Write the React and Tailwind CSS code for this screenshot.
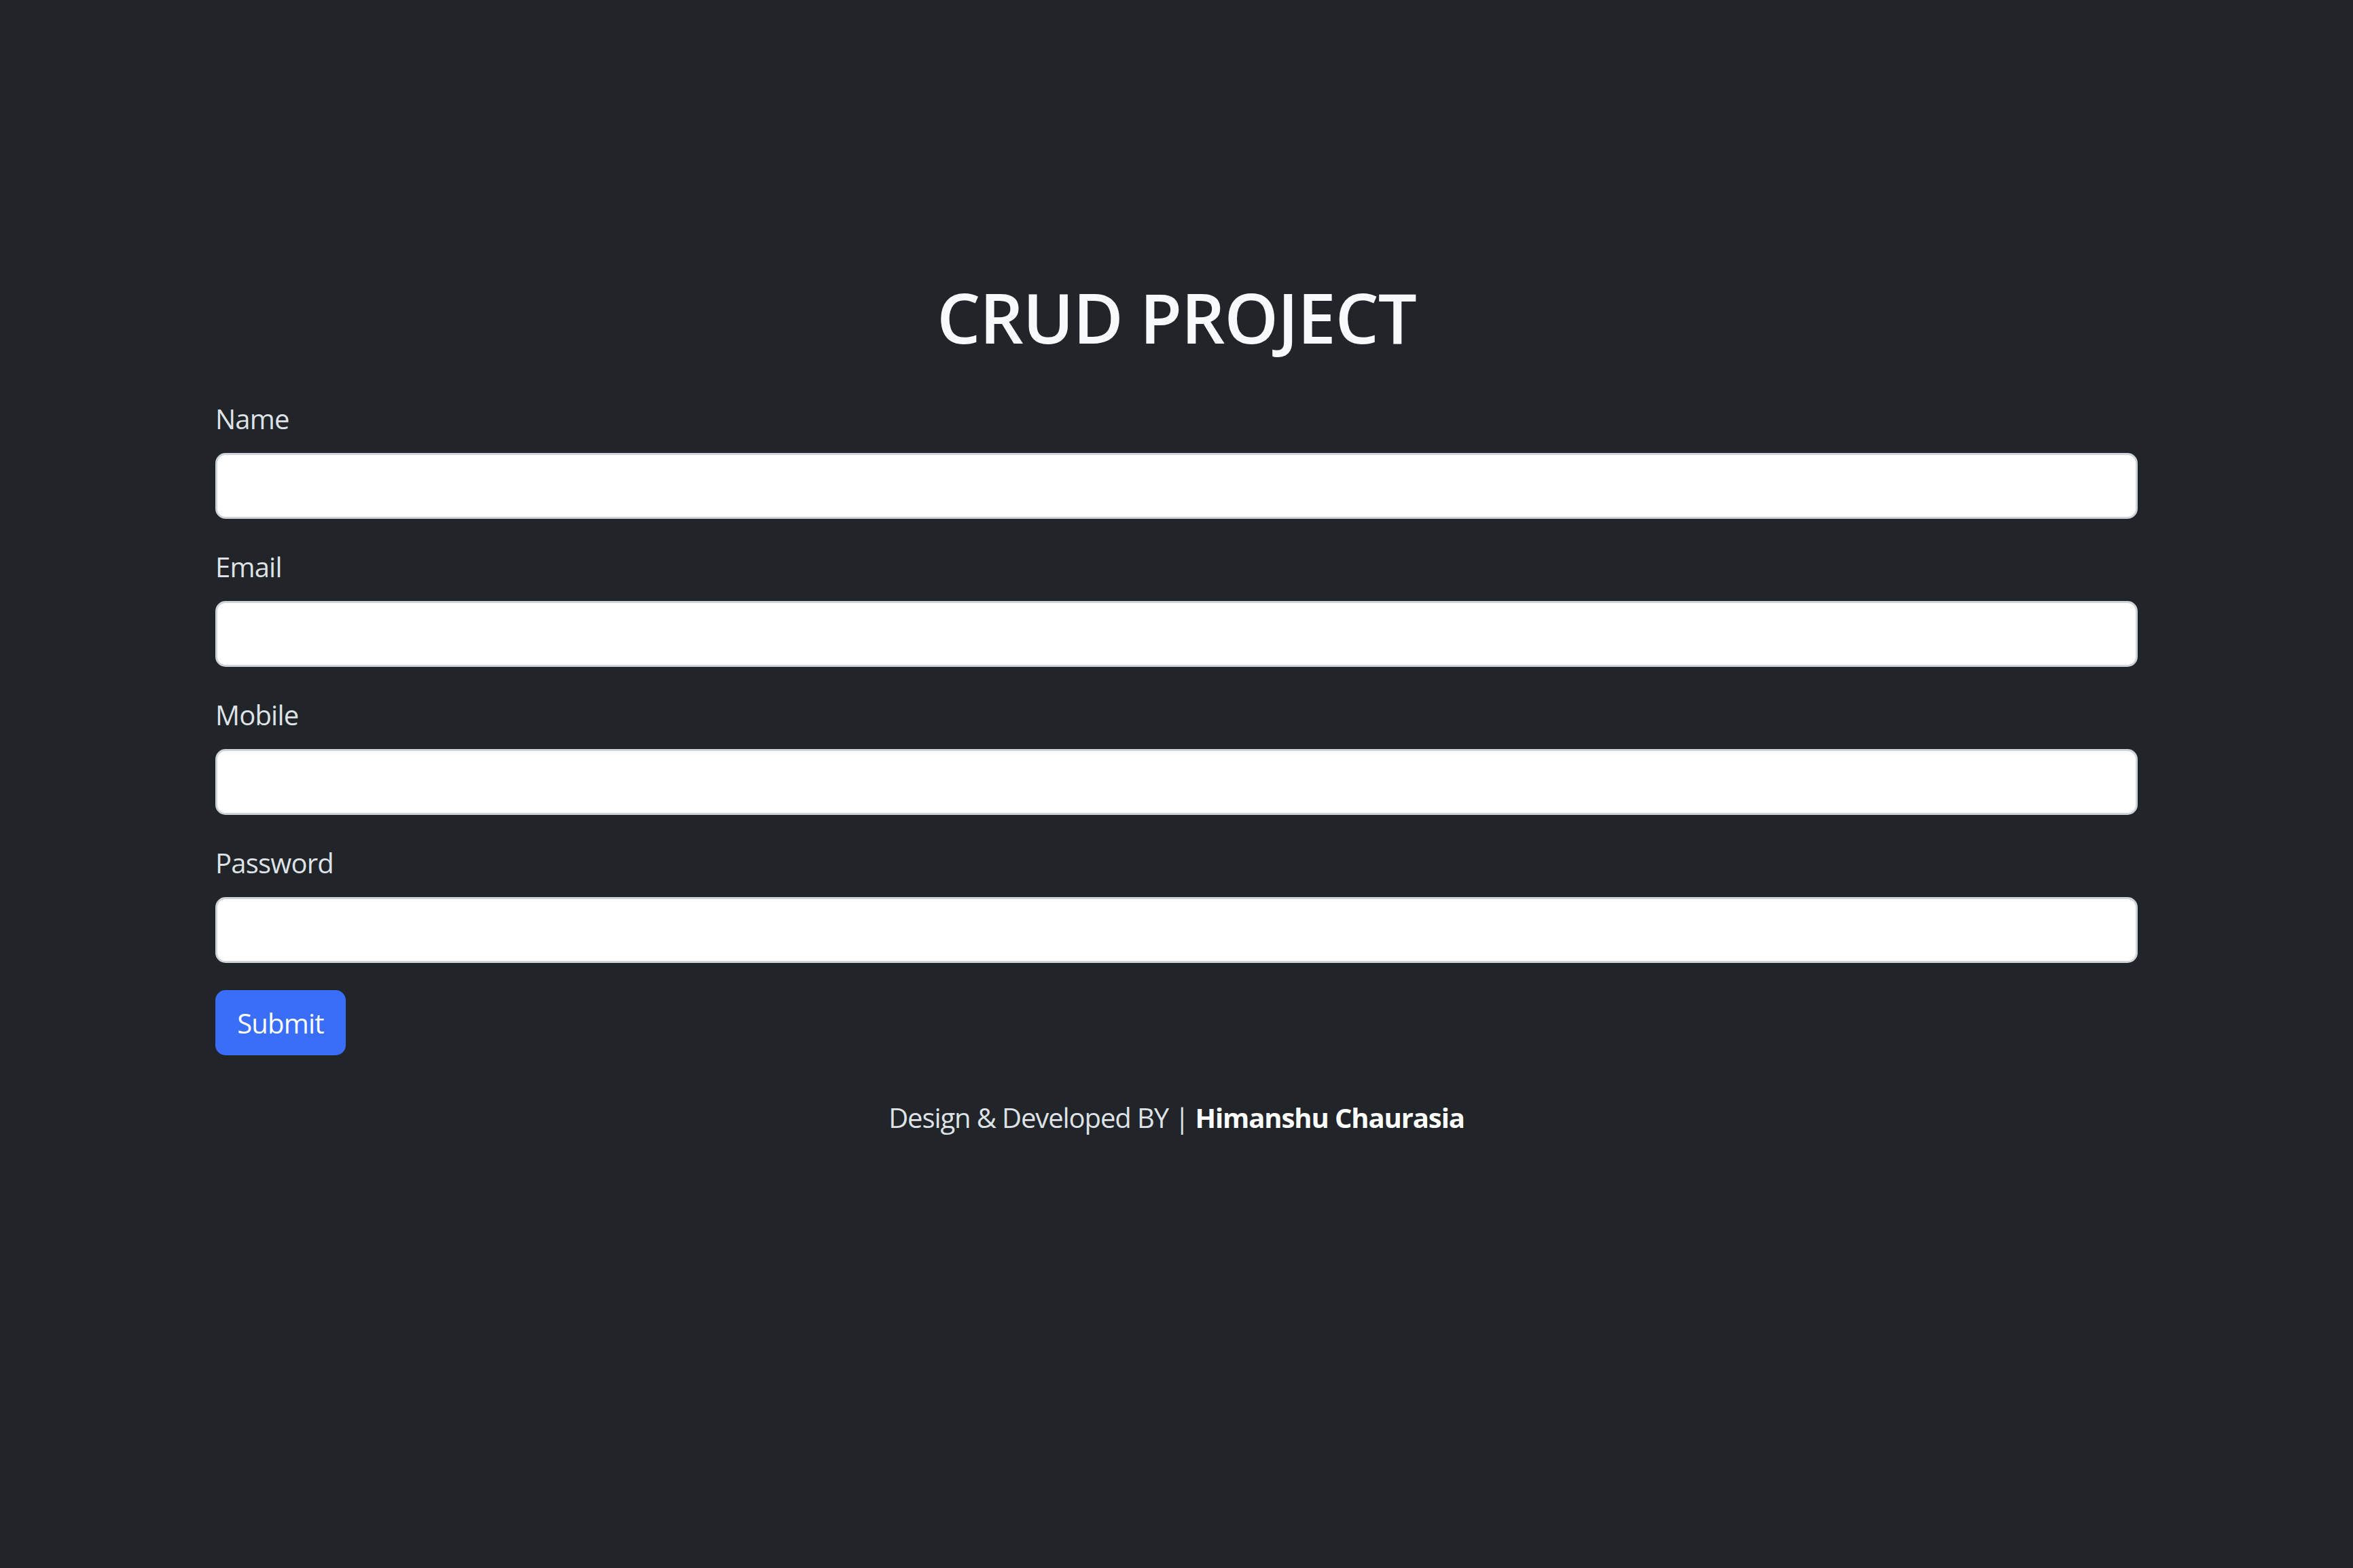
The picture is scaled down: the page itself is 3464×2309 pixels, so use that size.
export default function App() {
  const fields = ["Name", "Email", "Mobile", "Password"];
  return (
    <div className="min-h-screen w-full bg-[#212529] font-['Open_Sans',sans-serif] pt-[407px]">
      <div className="w-[2830px] mx-auto">
        <h1 className="text-center text-[101px] leading-[121px] font-semibold tracking-[-1px] text-[#f8f9fa] mb-[58px]">
          CRUD PROJECT
        </h1>
        <form onSubmit={(e) => e.preventDefault()}>
          {fields.map((f) => (
            <div key={f} className="mb-[40px]">
              <label className="block text-[40px] leading-[61px] tracking-[-0.8px] text-[#dee2e6] mb-[20px]">
                {f}
              </label>
              <input
                type={f === "Password" ? "password" : "text"}
                className="block w-full h-[97px] rounded-[15px] bg-white border-[3px] border-[#ced4da] px-[30px] text-[40px] outline-none"
              />
            </div>
          ))}
          <button
            type="submit"
            className="block w-[192px] h-[96px] rounded-[15px] bg-[#3a6ef8] text-white text-[40px] leading-[61px] tracking-[-0.8px] text-center"
          >
            Submit
          </button>
        </form>
        <p className="mt-[61px] text-center text-[40px] leading-[61px] tracking-[-1.1px] text-[#dee2e6]">
          Design &amp; Developed BY | <b className="font-bold text-white">Himanshu Chaurasia</b>
        </p>
      </div>
    </div>
  );
}
